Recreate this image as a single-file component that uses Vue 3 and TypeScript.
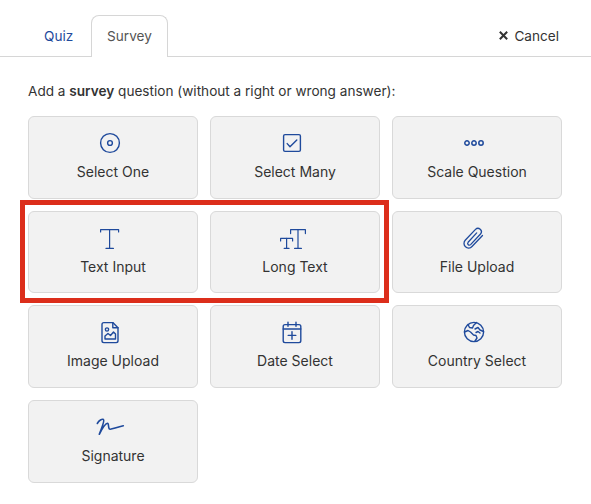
<template>
  <div class="panel">
    <div class="tabs">
      <a class="tab">Quiz</a>
      <a class="tab active">Survey</a>
      <a class="cancel">
        <svg width="11" height="11" viewBox="0 0 12 12" fill="none" stroke="#333" stroke-width="2.2">
          <path d="M2 2l8 8M10 2l-8 8" />
        </svg>
        Cancel
      </a>
    </div>
    <div class="body">
      <p class="intro">Add a <strong>survey</strong> question (without a right or wrong answer):</p>
      <div class="grid">
        <button v-for="item in items" :key="item.label" class="card">
          <svg class="icon" width="24" height="24" viewBox="0 0 24 24" fill="none" stroke="#1f4a9c" :stroke-width="item.stroke ?? 1.4" stroke-linecap="round" stroke-linejoin="round">
            <path v-for="d in item.paths" :key="d" :d="d" />
          </svg>
          <span>{{ item.label }}</span>
        </button>
        <div class="highlight"></div>
      </div>
    </div>
  </div>
</template>

<script setup lang="ts">
interface Item {
  label: string;
  paths: string[];
  stroke?: number;
}

const circle = (cx: number, cy: number, r: number) =>
  `M${cx - r} ${cy}a${r} ${r} 0 1 0 ${r * 2} 0a${r} ${r} 0 1 0 ${-r * 2} 0z`;

const items: Item[] = [
  { label: "Select One", paths: [circle(12, 12, 9.4), circle(12, 12, 2.4)] },
  {
    label: "Select Many",
    paths: ["M5 3.6h14a1.4 1.4 0 0 1 1.4 1.4v14a1.4 1.4 0 0 1-1.4 1.4H5A1.4 1.4 0 0 1 3.6 19V5A1.4 1.4 0 0 1 5 3.6z", "M7.2 12.6l2.8 3.2 6.8-6.8"],
  },
  { label: "Scale Question", paths: [circle(5, 12, 2.2), circle(12, 12, 2.2), circle(19, 12, 2.2)], stroke: 1.5 },
  { label: "Text Input", paths: ["M2.6 6V3.6h18v2.4", "M11.6 3.6v18.8", "M8 22.4h7.4"], stroke: 1.2 },
  {
    label: "Long Text",
    paths: ["M10.6 7.6V3.6h14.8v4", "M18 3.6v18.8", "M14.6 22.4h6.8", "M.6 15v-2.6h12v2.6", "M6.6 12.4v10", "M4.2 22.4h4.8"],
    stroke: 1.2,
  },
  {
    label: "File Upload",
    paths: ["M20.5 9.5L10 20.5a4.6 4.6 0 0 1-6.8-6.2L13.5 3.4a3.4 3.4 0 0 1 5 4.6L8.6 18.6a1.7 1.7 0 0 1-2.5-2.3l8.6-9.4"],
    stroke: 1.3,
  },
  {
    label: "Image Upload",
    paths: [
      "M5.8 2.6h9L20 7.8v13a1.8 1.8 0 0 1-1.8 1.8H5.8A1.8 1.8 0 0 1 4 20.8V4.4a1.8 1.8 0 0 1 1.8-1.8z",
      "M14.8 2.6v5.2H20",
      circle(9, 9.5, 1.6),
      "M7 19v-3l3-2.5 2.5 2 3-3.5 2 2v5z",
    ],
  },
  {
    label: "Date Select",
    paths: [
      "M5 4.6h14a1.8 1.8 0 0 1 1.8 1.8v14.4a1.8 1.8 0 0 1-1.8 1.8H5a1.8 1.8 0 0 1-1.8-1.8V6.4A1.8 1.8 0 0 1 5 4.6z",
      "M3.2 9h17.6",
      "M8 2.2v4M16 2.2v4",
      "M12 11.6v7.6M8.2 15.4h7.6",
    ],
  },
  {
    label: "Country Select",
    paths: [
      circle(12, 12, 9.6),
      "M6 4.5l1.5 3 3 .5 1-2.5 3-3",
      "M2.6 12l3.4-1.5 2.5 1.5 3 3 2.5 .5 1 2.5-2 3",
      "M13 9l3-1.5 2 2.5 3.5 1.5M14 12.5l2-1 2 1.5",
    ],
  },
  {
    label: "Signature",
    paths: ["M-.7 8.5C1 5.5 4 3.5 5.5 4.5 7 6 3.5 13 1.3 19.3 4 14 7.5 8.5 9.5 8.3c1.5 0 .5 4 1.8 5.7 1.5 1.2 6-1.5 14-3.3"],
    stroke: 1.6,
  },
];
</script>

<style>
body {
  background: #fff;
}
</style>

<style scoped>
.panel {
  width: 591px;
  height: 504px;
  font-family: Inter, "Liberation Sans", sans-serif;
  font-size: 13.6px;
  color: #333;
  overflow: hidden;
}
.tabs {
  display: flex;
  align-items: flex-end;
  height: 57px;
  padding: 0 32px 0 28px;
  border-bottom: 1px solid #d6d6d6;
  box-sizing: border-box;
}
.tab {
  width: 63px;
  height: 42px;
  margin-bottom: -1px;
  padding: 0 0 0 15px;
  line-height: 41px;
  box-sizing: border-box;
  color: #1f4a9c;
  border: 1px solid transparent;
  border-bottom: 0;
  border-radius: 8px 8px 0 0;
}
.tab.active {
  width: 77px;
  padding: 0;
  text-align: center;
  color: #555;
  background: #fff;
  border-color: #d6d6d6;
}
.cancel {
  display: flex;
  align-items: center;
  gap: 5px;
  height: 41px;
  margin-left: auto;
  color: #333;
}
.body {
  padding: 0 28px;
}
.intro {
  margin: 25px 0 16px;
  line-height: 18px;
}
.intro strong {
  font-weight: 600;
}
.grid {
  position: relative;
  display: grid;
  grid-template-columns: repeat(3, 170px);
  grid-auto-rows: 82.67px;
  gap: 12px;
}
.card {
  display: flex;
  flex-direction: column;
  align-items: center;
  justify-content: flex-start;
  gap: 8px;
  padding: 14px 0 0;
  background: #f2f2f2;
  border: 1px solid #d9d9d9;
  border-radius: 6px;
  font: inherit;
  font-size: 14px;
  color: #333;
}
.icon {
  overflow: visible;
  margin-right: 6px;
}
.highlight {
  position: absolute;
  left: -8.5px;
  top: 84px;
  width: 369.5px;
  height: 102.5px;
  box-sizing: border-box;
  border: 5px solid #dc2e1b;
  pointer-events: none;
}
</style>
